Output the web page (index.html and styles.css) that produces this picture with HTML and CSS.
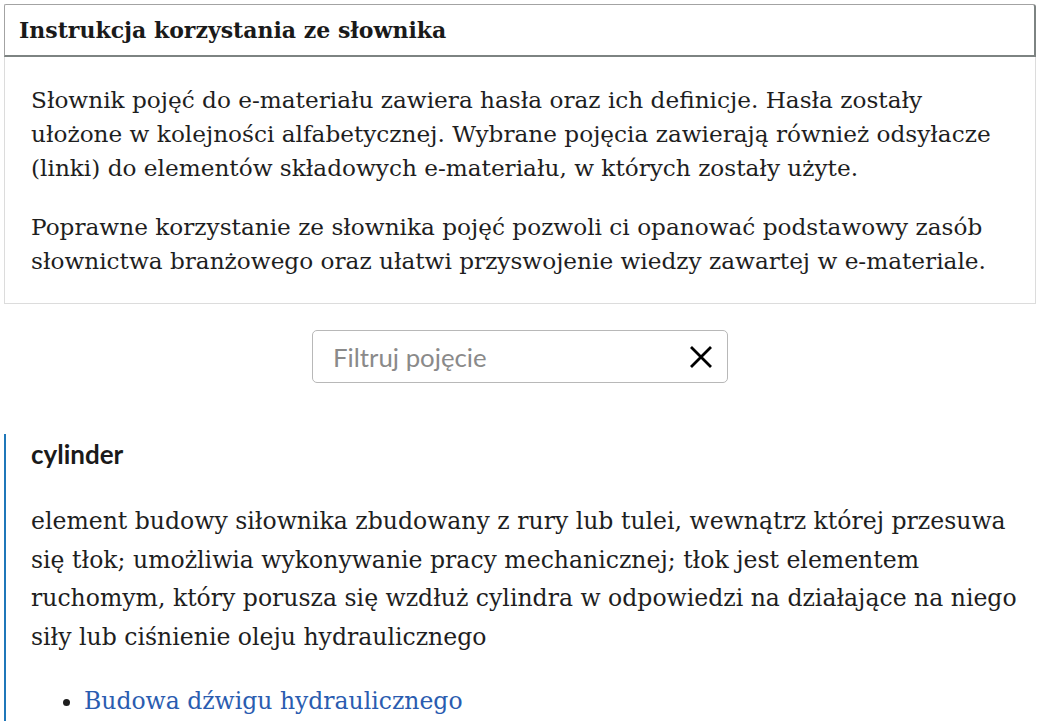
FILE: index.html
```html
<!DOCTYPE html>
<html lang="pl">
<head>
<meta charset="utf-8">
<title>Słownik pojęć</title>
<link rel="stylesheet" href="styles.css">
</head>
<body>
<section class="instructions">
  <h2 class="instructions-title">Instrukcja korzystania ze słownika</h2>
  <div class="instructions-body">
    <p>Słownik pojęć do e-materiału zawiera hasła oraz ich definicje. Hasła zostały ułożone w kolejności alfabetycznej. Wybrane pojęcia zawierają również odsyłacze (linki) do elementów składowych e-materiału, w których zostały użyte.</p>
    <p>Poprawne korzystanie ze słownika pojęć pozwoli ci opanować podstawowy zasób słownictwa branżowego oraz ułatwi przyswojenie wiedzy zawartej w e-materiale.</p>
  </div>
</section>
<div class="filter-row">
  <div class="filter">
    <span class="filter-placeholder">Filtruj pojęcie</span>
    <svg class="filter-clear" width="24" height="24" viewBox="0 0 24 24" aria-hidden="true">
      <path d="M2 2 L22 22 M22 2 L2 22" stroke="#000" stroke-width="2.8" fill="none"/>
    </svg>
  </div>
</div>
<article class="entry">
  <h3 class="entry-term">cylinder</h3>
  <p class="entry-def">element budowy siłownika zbudowany z rury lub tulei, wewnątrz której przesuwa się tłok; umożliwia wykonywanie pracy mechanicznej; tłok jest elementem ruchomym, który porusza się wzdłuż cylindra w odpowiedzi na działające na niego siły lub ciśnienie oleju hydraulicznego</p>
  <ul class="entry-links">
    <li><a href="#">Budowa dźwigu hydraulicznego</a></li>
  </ul>
</article>
</body>
</html>
```
FILE: styles.css
```css
html, body {
  margin: 0;
  padding: 0;
  background: #fff;
}
body {
  padding: 4px 4px 0 4px;
  color: #1e1e1e;
  font-family: "DejaVu Serif", serif;
  overflow: hidden;
}
.instructions {
  margin: 0;
}
.instructions-title {
  margin: 0;
  box-sizing: border-box;
  height: 53px;
  display: flex;
  align-items: center;
  padding: 0 14px;
  font-size: 22px;
  font-weight: bold;
  border-top: 1px solid #a3a3a3;
  border-left: 1px solid #a3a3a3;
  border-right: 2px solid #7d8382;
  border-bottom: 2px solid #7d8382;
  border-radius: 2px 3px 0 0;
  color: #1a1a1a;
}
.instructions-body {
  border: 1px solid #dcdcdc;
  border-top: none;
  padding: 26px 20px 25px 26px;
  font-size: 23.2px;
  line-height: 34px;
}
.instructions-body p {
  margin: 0;
}
.instructions-body p + p {
  margin-top: 25px;
}
.filter-row {
  display: flex;
  justify-content: center;
  margin-top: 26px;
}
.filter {
  width: 416px;
  height: 53px;
  box-sizing: border-box;
  border: 1px solid #b8b8b8;
  border-radius: 5px;
  display: flex;
  align-items: center;
  justify-content: space-between;
  padding: 0 14px 0 20px;
}
.filter-placeholder {
  font-family: Lato, sans-serif;
  font-size: 25.8px;
  color: #8a8a8a;
}
.filter-clear {
  display: block;
}
.entry {
  margin-top: 51px;
  border-left: 2px solid #1f77b9;
  padding: 2px 0 0 25px;
}
.entry-term {
  margin: 0;
  font-family: Lato, sans-serif;
  font-weight: bold;
  font-size: 26px;
  line-height: 36px;
  color: #1a1a1a;
}
.entry-def {
  margin: 30px 0 0 0;
  font-size: 23.55px;
  line-height: 38.5px;
}
.entry-links {
  margin: 26px 0 0 0;
  padding-left: 53px;
  font-size: 23.5px;
  line-height: 38.5px;
}
.entry-links a {
  color: #2a5cb0;
  text-decoration: none;
}
```
